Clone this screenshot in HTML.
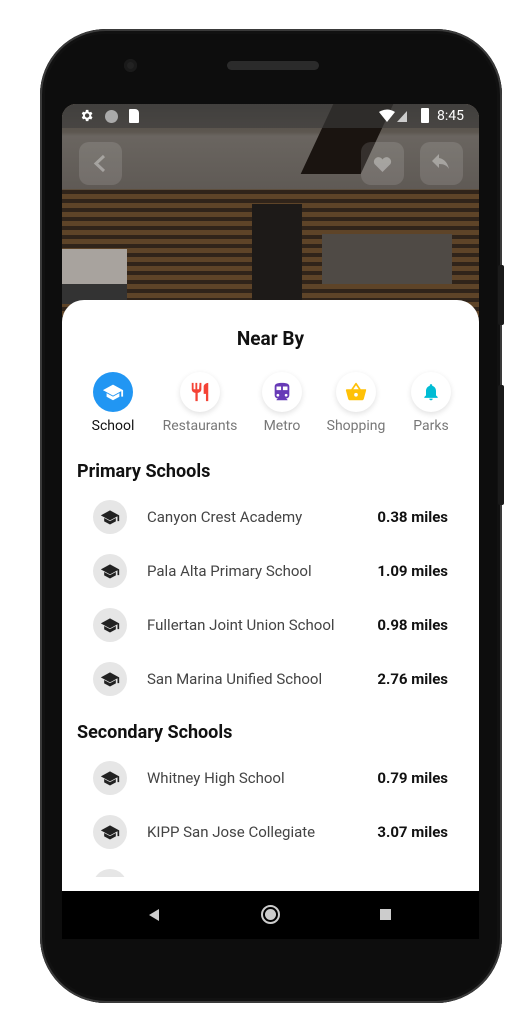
<!DOCTYPE html>
<html><head><meta charset="utf-8"><style>
*{margin:0;padding:0;box-sizing:border-box}
body{width:507px;height:1015px;background:#fff;position:relative;overflow:hidden;font-family:"Roboto","Liberation Sans",sans-serif}
.phone{position:absolute;left:40px;top:29px;width:462px;height:974px;border-radius:66px;background:#0d0d0d;box-shadow:inset 0 0 0 2px #3a3a3a,inset 0 0 0 5px #111}
.btn{position:absolute;background:#1a1a1a;border-radius:2px;width:6px;left:498px}
.spk{position:absolute;left:227px;top:61px;width:92px;height:9px;border-radius:5px;background:#2b2b2b}
.cam{position:absolute;left:124px;top:59px;width:13px;height:13px;border-radius:50%;background:#222;box-shadow:inset 0 0 0 3px #1a1a1a}
.screen{position:absolute;left:62px;top:104px;width:417px;height:787px;overflow:hidden;border-radius:14px 14px 0 0;background:#fff}
.photo{position:absolute;left:0;top:0;width:417px;height:220px;background:
linear-gradient(180deg,#4a4540 0,#5d5750 28px,#6a6560 32px,#5f5a55 85px,rgba(0,0,0,0) 86px),
repeating-linear-gradient(180deg,#5e4428 0 5px,#30241a 5px 9px);}
.sb{position:absolute;left:0;top:0;width:417px;height:24px;background:rgba(60,60,60,.6);color:#fff;font-size:13px}
.tb{position:absolute;top:38px;width:43px;height:43px;border-radius:10px;background:rgba(255,255,255,.12)}
.sheet{position:absolute;left:0;top:196px;width:417px;height:600px;background:#fff;border-radius:22px 22px 0 0}
.title{position:absolute;top:27px;width:100%;text-align:center;font-size:19px;font-weight:bold;color:#111}
.cat{position:absolute;top:72px;width:90px;margin-left:-45px;text-align:center;font-size:14px;color:#777}
.cat .c{width:40px;height:40px;border-radius:50%;margin:0 auto 6px;background:#fff;box-shadow:0 2px 6px rgba(0,0,0,.12);display:flex;align-items:center;justify-content:center}
h3{position:absolute;left:15px;font-size:18px;font-weight:bold;color:#111}
.row{position:absolute;left:31px;width:355px;height:34px;font-size:15px;color:#444}
.row .i{position:absolute;left:0;top:0;width:34px;height:34px;border-radius:50%;background:#e6e6e6;display:flex;align-items:center;justify-content:center}
.row .n{position:absolute;left:54px;top:8px}
.row .d{position:absolute;right:0;top:8px;font-weight:bold;color:#111}
.nav{position:absolute;left:62px;top:891px;width:417px;height:48px;background:#000}
</style></head><body>
<div class="phone"></div>
<div class="btn" style="top:265px;height:60px"></div>
<div class="btn" style="top:385px;height:120px"></div>
<div class="cam"></div><div class="spk"></div>
<div class="screen">
 <div class="photo"></div>
 <div style="position:absolute;left:190px;top:100px;width:50px;height:100px;background:#1d1a18"></div>
 <div style="position:absolute;left:255px;top:0;width:60px;height:70px;background:#1a1410;transform:skewX(-25deg)"></div>
 <div style="position:absolute;left:0;top:145px;width:65px;height:35px;background:#a8a39e"></div>
 <div style="position:absolute;left:0;top:180px;width:65px;height:20px;background:#333"></div>
 <div style="position:absolute;left:260px;top:130px;width:130px;height:50px;background:#4f4a45"></div>
 <div class="sb">
  <svg style="position:absolute;left:17px;top:4px" width="15" height="15" viewBox="0 0 24 24"><path fill="#fff" d="M19.4 13a7.5 7.5 0 000-2l2.1-1.6-2-3.5-2.5 1a7 7 0 00-1.7-1L15 3h-4l-.4 2.7a7 7 0 00-1.7 1l-2.5-1-2 3.5L6.5 11a7.5 7.5 0 000 2l-2.1 1.6 2 3.5 2.5-1a7 7 0 001.7 1L11 21h4l.4-2.7a7 7 0 001.7-1l2.5 1 2-3.5zM13 15.5a3.5 3.5 0 110-7 3.5 3.5 0 010 7z"/></svg>
  <div style="position:absolute;left:43px;top:6px;width:13px;height:13px;border-radius:50%;background:#aaa"></div>
  <div style="position:absolute;left:67px;top:5px;width:10px;height:14px;background:#fff;border-radius:1px 4px 1px 1px"></div>
  <svg style="position:absolute;left:317px;top:5px" width="34" height="14" viewBox="0 0 34 14"><path fill="#fff" d="M0 3Q8-2 16 3L8 13z"/><path fill="#ccc" d="M18 13L28 2v11z"/></svg>
  <div style="position:absolute;left:359px;top:4px;width:8px;height:15px;background:#fff;border-radius:1px"></div>
  <div style="position:absolute;left:375px;top:4px;font-size:14px">8:45</div>
 </div>
 <div class="tb" style="left:17px"><svg width="43" height="43" viewBox="0 0 43 43"><path d="M25 14l-8 7.5 8 7.5" stroke="rgba(255,255,255,.35)" stroke-width="3" fill="none"/></svg></div>
 <div class="tb" style="left:299px"><svg width="43" height="43" viewBox="0 0 43 43"><path fill="rgba(255,255,255,.35)" d="M21.5 30l-8-8a4.5 4.5 0 018-4.5 4.5 4.5 0 018 4.5z"/></svg></div>
 <div class="tb" style="left:358px"><svg width="43" height="43" viewBox="0 0 43 43"><path fill="rgba(255,255,255,.35)" d="M19 16v-4l-7 7 7 7v-4c5 0 8 1.5 10 5-1-5-4-10-10-11z"/></svg></div>
 <div class="sheet">
  <div class="title">Near By</div>
  <div class="cat" style="left:51px;color:#111"><div class="c" style="background:#2196f3;box-shadow:none"><svg width="22" height="22" viewBox="0 0 24 24"><path fill="#fff" d="M12 4L1 10l11 6 9-4.9V17h2v-7zM5 13.2v4L12 21l7-3.8v-4L12 17z"/></svg></div>School</div>
  <div class="cat" style="left:138px"><div class="c"><svg width="22" height="22" viewBox="0 0 24 24"><path fill="#f44336" d="M11 9H9V2H7v7H5V2H3v7c0 2.1 1.7 3.8 4 4v9h2.5v-9c2.3-.2 4-1.9 4-4V2h-2zm5-3v8h2.5v8H21V2c-2.8 0-5 2.2-5 4z"/></svg></div>Restaurants</div>
  <div class="cat" style="left:220px"><div class="c"><svg width="22" height="22" viewBox="0 0 24 24"><path fill="#673ab7" d="M12 2C8 2 4 2.5 4 6v9.5A3.5 3.5 0 007.5 19L6 20.5v.5h12v-.5L16.5 19a3.5 3.5 0 003.5-3.5V6c0-3.5-4-4-8-4zM7.5 17a1.5 1.5 0 110-3 1.5 1.5 0 010 3zM11 10H6V6h5zm2 0V6h5v4zm3.5 7a1.5 1.5 0 110-3 1.5 1.5 0 010 3z"/></svg></div>Metro</div>
  <div class="cat" style="left:294px"><div class="c"><svg width="22" height="22" viewBox="0 0 24 24"><path fill="#ffc107" d="M17.2 9l-4.4-6.6a1 1 0 00-1.6 0L6.8 9H2a1 1 0 00-1 1.3l2.5 9.3c.2.8 1 1.4 2 1.4h13c.9 0 1.700-.6 2-1.4l2.5-9.3L23 9zM9 9l3-4.4L15 9zm3 8a2 2 0 110-4 2 2 0 010 4z"/></svg></div>Shopping</div>
  <div class="cat" style="left:369px"><div class="c"><svg width="20" height="20" viewBox="0 0 24 24"><path fill="#00bcd4" d="M12 22a2 2 0 002-2h-4a2 2 0 002 2zm6-6v-5c0-3.1-1.6-5.6-4.5-6.3V4a1.5 1.5 0 00-3 0v.7C7.6 5.4 6 7.9 6 11v5l-2 2v1h16v-1z"/></svg></div>Parks</div>
 </div>
 <h3 style="top:357px">Primary Schools</h3>
 <h3 style="top:618px">Secondary Schools</h3>
</div>
<div class="nav">
 <svg style="position:absolute;left:86px;top:17px" width="12" height="14" viewBox="0 0 12 14"><path fill="#ccc" d="M11 1v12L1 7z"/></svg>
 <div style="position:absolute;left:199px;top:14px;width:19px;height:19px;border-radius:50%;border:2px solid #ccc"><div style="margin:2px;width:11px;height:11px;border-radius:50%;background:#ccc"></div></div>
 <div style="position:absolute;left:318px;top:18px;width:11px;height:11px;background:#ccc"></div>
</div>
<div style="position:absolute;left:62px;top:104px;width:417px;height:773px;overflow:hidden;pointer-events:none">
 <div class="row" style="top:396px"><div class="i"><svg width="20" height="20" viewBox="0 0 24 24"><path fill="#222" d="M12 4L1 10l11 6 9-4.9V17h2v-7zM5 13.2v4L12 21l7-3.8v-4L12 17z"/></svg></div><span class="n">Canyon Crest Academy</span><span class="d">0.38 miles</span></div>
 <div class="row" style="top:450px"><div class="i"><svg width="20" height="20" viewBox="0 0 24 24"><path fill="#222" d="M12 4L1 10l11 6 9-4.9V17h2v-7zM5 13.2v4L12 21l7-3.8v-4L12 17z"/></svg></div><span class="n">Pala Alta Primary School</span><span class="d">1.09 miles</span></div>
 <div class="row" style="top:504px"><div class="i"><svg width="20" height="20" viewBox="0 0 24 24"><path fill="#222" d="M12 4L1 10l11 6 9-4.9V17h2v-7zM5 13.2v4L12 21l7-3.8v-4L12 17z"/></svg></div><span class="n">Fullertan Joint Union School</span><span class="d">0.98 miles</span></div>
 <div class="row" style="top:558px"><div class="i"><svg width="20" height="20" viewBox="0 0 24 24"><path fill="#222" d="M12 4L1 10l11 6 9-4.9V17h2v-7zM5 13.2v4L12 21l7-3.8v-4L12 17z"/></svg></div><span class="n">San Marina Unified School</span><span class="d">2.76 miles</span></div>
 <div class="row" style="top:657px"><div class="i"><svg width="20" height="20" viewBox="0 0 24 24"><path fill="#222" d="M12 4L1 10l11 6 9-4.9V17h2v-7zM5 13.2v4L12 21l7-3.8v-4L12 17z"/></svg></div><span class="n">Whitney High School</span><span class="d">0.79 miles</span></div>
 <div class="row" style="top:711px"><div class="i"><svg width="20" height="20" viewBox="0 0 24 24"><path fill="#222" d="M12 4L1 10l11 6 9-4.9V17h2v-7zM5 13.2v4L12 21l7-3.8v-4L12 17z"/></svg></div><span class="n">KIPP San Jose Collegiate</span><span class="d">3.07 miles</span></div>
 <div class="row" style="top:765px"><div class="i"></div></div>
</div>
</body></html>
